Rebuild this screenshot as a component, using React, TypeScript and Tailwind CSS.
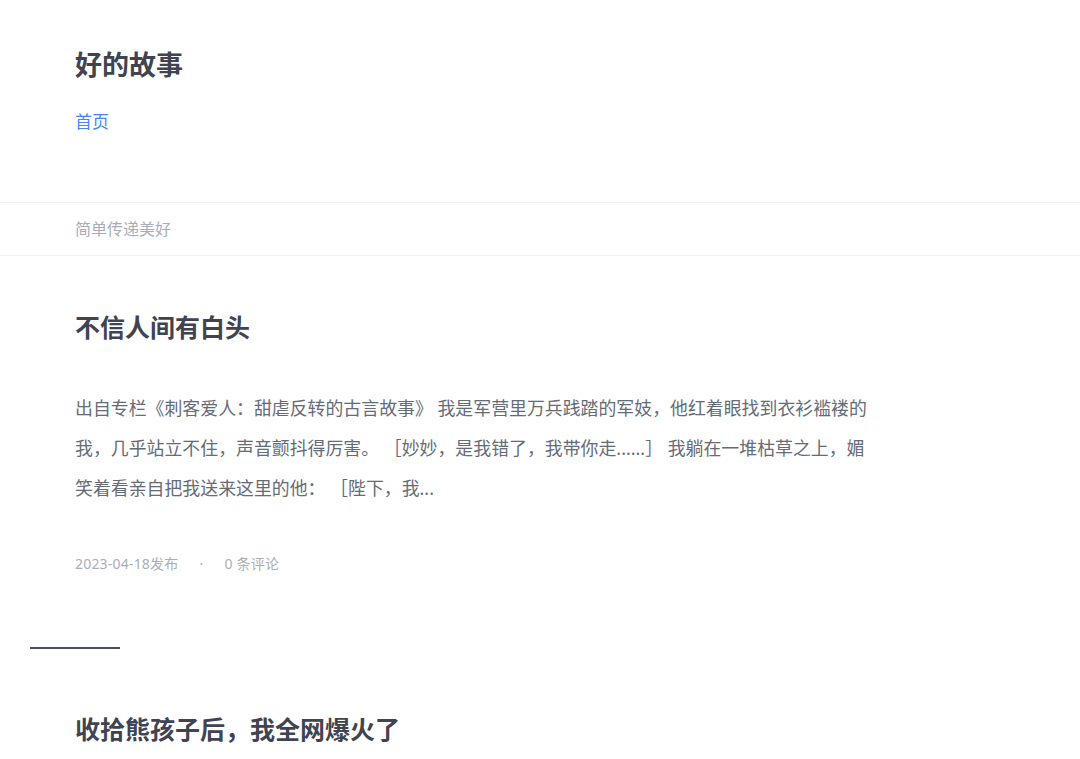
import React from "react";

const font = {
  fontFamily: '"Noto Sans", "Noto Sans CJK SC", sans-serif',
};

export default function App() {
  return (
    <div className="min-h-screen bg-white" style={font}>
      {/* Header */}
      <header className="px-[75px] pt-[47px] pb-[68px]">
        <h1 className="text-[27px] font-bold leading-[36px] text-[#3f4450]">好的故事</h1>
        <nav className="mt-[27px]">
          <a href="#" className="text-[17px] leading-[24px] text-[#4a84f7]">首页</a>
        </nav>
      </header>

      {/* Slogan */}
      <div className="flex h-[54px] items-center border-y border-[#eeeff1] px-[75px]">
        <span className="text-[16px] text-[#a7adb8]">简单传递美好</span>
      </div>

      {/* Posts */}
      <main>
        <article className="px-[75px] pt-[54px]">
          <h2 className="text-[25px] font-bold leading-[34px] text-[#3f4450]">不信人间有白头</h2>
          <p className="mt-[44px] max-w-[804px] text-[17.9px] leading-[40px] text-[#656b77]">
            出自专栏《刺客爱人：甜虐反转的古言故事》 我是军营里万兵践踏的军妓，他红着眼找到衣衫褴褛的我，几乎站立不住，声音颤抖得厉害。 ［妙妙，是我错了，我带你走......］ 我躺在一堆枯草之上，媚笑着看亲自把我送来这里的他： ［陛下，我...
          </p>
          <div className="mt-[46px] flex items-center text-[14px] leading-[20px] tracking-[0.2px] text-[#a8aeb8]">
            <span>2023-04-18发布</span>
            <span className="mx-[21px]">·</span>
            <span>0 条评论</span>
          </div>
        </article>

        <div className="ml-[30px] mt-[73px] h-[2px] w-[90px] bg-[#4a4f5a]" />

        <article className="px-[75px] pt-[63px]">
          <h2 className="text-[25px] font-bold leading-[34px] text-[#3f4450]">收拾熊孩子后，我全网爆火了</h2>
        </article>
      </main>
    </div>
  );
}
